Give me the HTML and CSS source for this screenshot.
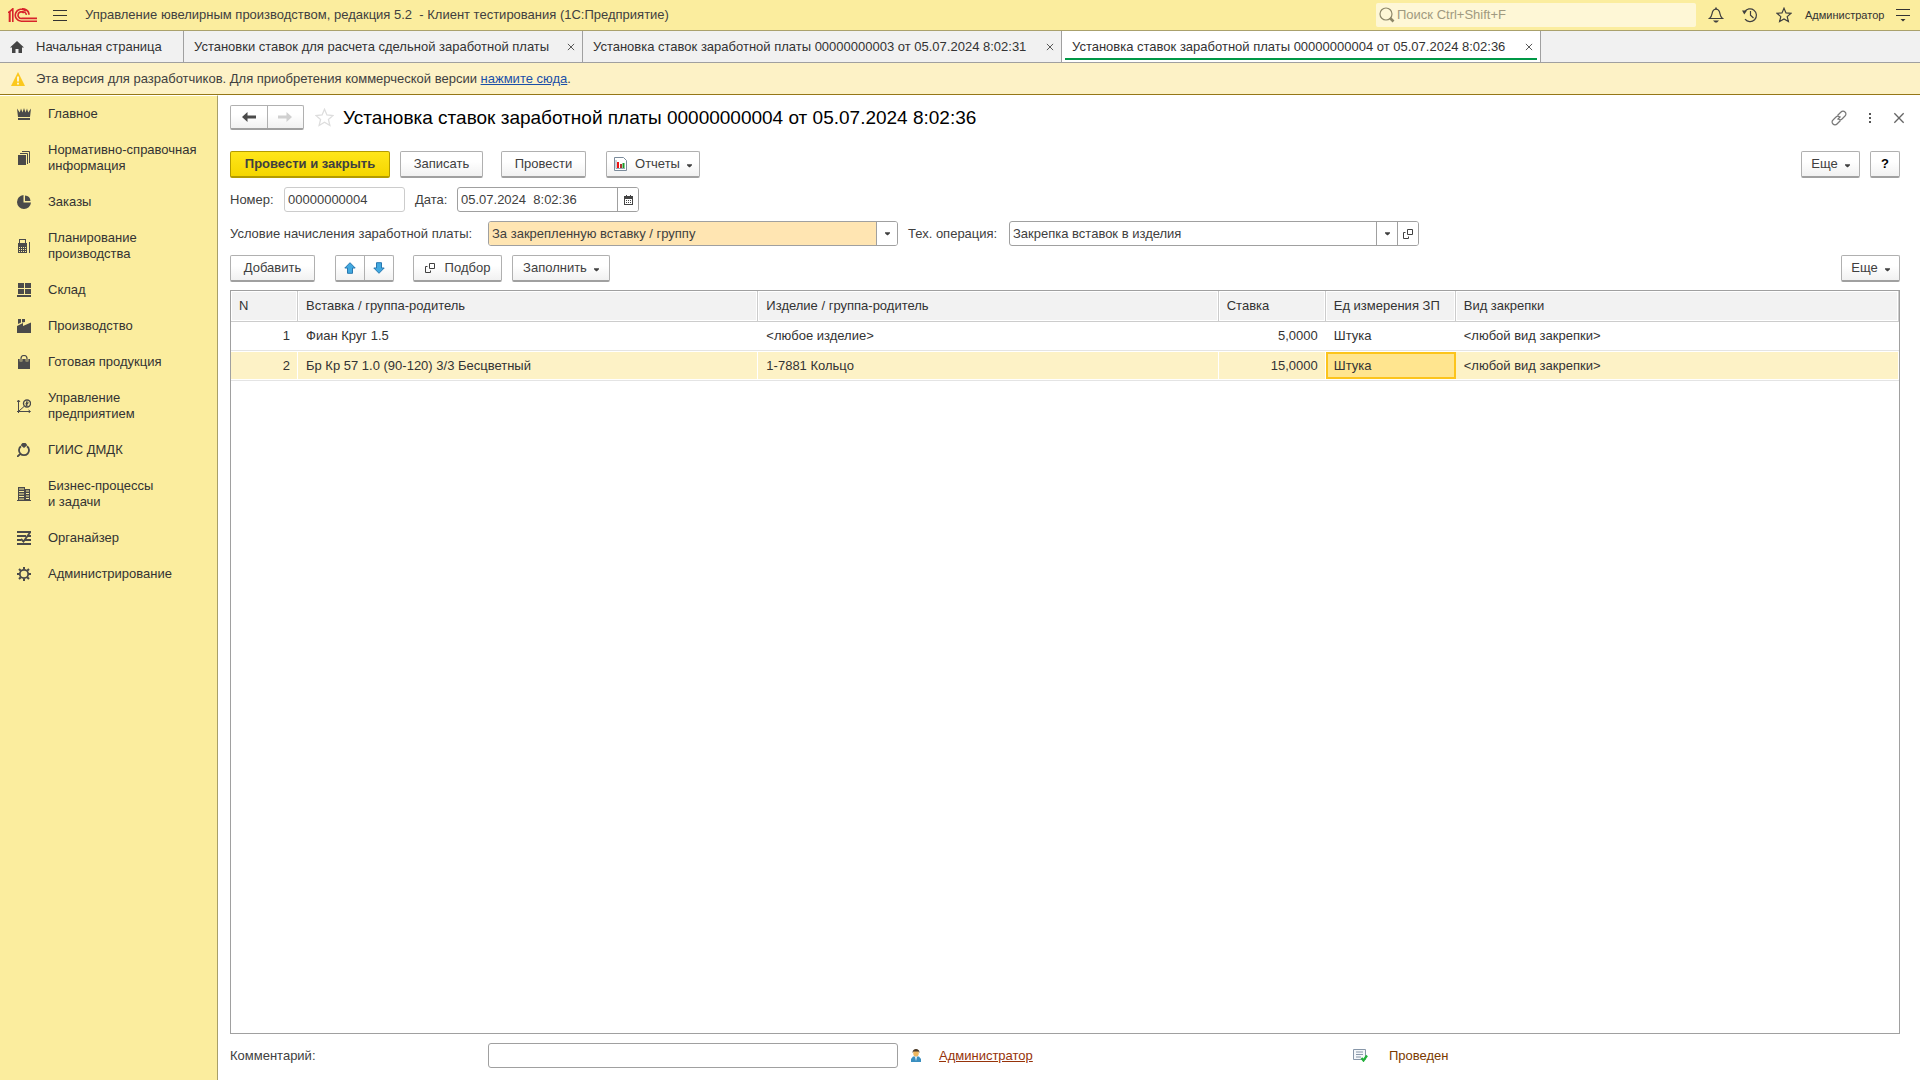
FILE: index.html
```html
<!DOCTYPE html>
<html lang="ru">
<head>
<meta charset="utf-8">
<title>Установка ставок заработной платы</title>
<link rel="stylesheet" href="styles.css">
</head>
<body>
<svg class="defs" aria-hidden="true">
  <symbol id="caret" viewBox="0 0 6 4"><path d="M0 0h6v1L3.500 3.500h-1L0 1z" fill="currentColor"/></symbol>
  <symbol id="cross" viewBox="0 0 9 9"><path d="M1 1l7 7M8 1L1 8" fill="none" stroke="currentColor" stroke-width="1"/></symbol>
  <symbol id="windows" viewBox="0 0 10 10"><path d="M4.500.5h5v5h-5zM2.500 3.500h-2v6h5v-2" fill="none" stroke="currentColor" stroke-width="1"/></symbol>
</svg>

<header class="topbar">
  <svg class="logo" viewBox="0 0 29 15" width="29" height="15"><g fill="none" stroke="#d8232a" stroke-width="1.600"><path d="M0 4.200h1.500V14M1.200 4.200L4.800.8V14"/><path d="M1.800 3.500V14M17.800 3.200A6 6 0 1 0 13.500 13.200H29"/><path d="M15.800 5A3.300 3.300 0 1 0 13.800 10.400H29"/><path d="M21 6.800C21 2 16.500.8 14 .9M18.400 6.800C18 4 16 3.700 14 3.700" /></g></svg>
  <button class="icon-btn menu" aria-label="Меню"><svg viewBox="0 0 14 13" width="14" height="13"><path d="M0 1.500h14M0 6.500h14M0 11.500h14" stroke="#333" stroke-width="1"/></svg></button>
  <span class="app-title">Управление ювелирным производством, редакция 5.2 &nbsp;- Клиент тестирования (1С:Предприятие)</span>
  <label class="search">
    <svg viewBox="0 0 16 16" width="16" height="16"><circle cx="7" cy="7" r="6" fill="none" stroke="#8d8769" stroke-width="1.200"/><path d="M11 11l3.500 3.500" stroke="#8d8769" stroke-width="2.600"/></svg>
    <input type="text" placeholder="Поиск Ctrl+Shift+F" aria-label="Поиск">
  </label>
  <div class="top-tools">
    <button class="icon-btn" aria-label="Уведомления"><svg viewBox="0 0 16 16" width="16" height="16"><path d="M1.500 11.500C4.500 9.500 3.500 6 5 3.800 5.800 2.600 7 2.200 8 2.200s2.200.4 3 1.600C12.500 6 11.500 9.500 14.500 11.500z" fill="none" stroke="#3f3f3f" stroke-width="1.200"/><path d="M8 .5v2" stroke="#3f3f3f" stroke-width="1.600"/><path d="M5 13.500h6l-2 2H7z" fill="#3f3f3f"/></svg></button>
    <button class="icon-btn" aria-label="История"><svg viewBox="0 0 16 16" width="16" height="16"><path d="M2.500 5A6.400 6.400 0 1 1 3 12.200" fill="none" stroke="#3f3f3f" stroke-width="1.200"/><path d="M0 3.500h5L2.300 7.500z" fill="#3f3f3f"/><path d="M8.500 4v4.200l3 2.800" fill="none" stroke="#3f3f3f" stroke-width="1.200"/></svg></button>
    <button class="icon-btn" aria-label="Избранное"><svg viewBox="0 0 16 16" width="16" height="16"><path d="M8 1.200l2 4.700 5 .4-3.800 3.300 1.200 5L8 11.900l-4.400 2.700 1.200-5L1 6.300l5-.4z" fill="none" stroke="#3f3f3f" stroke-width="1.200"/></svg></button>
  </div>
  <a class="user" href="#">Администратор</a>
  <button class="icon-btn" aria-label="Настройки"><svg viewBox="0 0 14 14" width="14" height="14"><path d="M0 1.500h14M0 7.500h14" stroke="#333" stroke-width="1"/><path d="M4.500 11h5L7 13.500z" fill="#333"/></svg></button>
</header>

<nav class="tabs" aria-label="Открытые окна">
  <a class="tab home" href="#"><svg viewBox="0 0 14 12" width="14" height="12"><path d="M7 0l7 6.500h-2V12H8.500V8h-3v4H2V6.500H0z" fill="#444"/></svg><span>Начальная страница</span></a>
  <div class="tab list"><a href="#">Установки ставок для расчета сдельной заработной платы</a><button aria-label="Закрыть"><svg width="8" height="8"><use href="#cross"/></svg></button></div>
  <div class="tab doc"><a href="#">Установка ставок заработной платы 00000000003 от 05.07.2024 8:02:31</a><button aria-label="Закрыть"><svg width="8" height="8"><use href="#cross"/></svg></button></div>
  <div class="tab doc active"><a href="#">Установка ставок заработной платы 00000000004 от 05.07.2024 8:02:36</a><button aria-label="Закрыть"><svg width="8" height="8"><use href="#cross"/></svg></button></div>
</nav>

<div class="notice">
  <svg viewBox="0 0 14 14" width="14" height="14"><path d="M7 0l7 14H0z" fill="#fbc81e"/><path d="M7 4.500v5M7 10.800v1.700" stroke="#fff" stroke-width="1.600"/></svg>
  <span>Эта версия для разработчиков. Для приобретения коммерческой версии <a href="#">нажмите сюда</a>.</span>
</div>

<div class="workspace">
  <nav class="sidebar" aria-label="Разделы">
    <a href="#"><svg viewBox="0 0 14 14"><path d="M0 1.500l2.800 4L4 1.500l1.500 4L7 1l1.500 4.500 1.500-4 1.200 4 2.800-4-1 8.500H1zM1 11h12v2H1z"/></svg>Главное</a>
    <a href="#"><svg viewBox="0 0 14 14"><path d="M1 4h8v10H1z"/><path d="M3 2.500h7.500V13M5 .5h7.500V12" fill="none" stroke="#4a4a4a"/></svg>Нормативно-справочная информация</a>
    <a href="#"><svg viewBox="0 0 14 14"><path d="M6.500 0A7 7 0 1 0 14 7.500H6.500z"/><path d="M8 .5A6 6 0 0 1 13.500 6H8z"/></svg>Заказы</a>
    <a href="#"><svg viewBox="0 0 14 14"><path d="M1 4h1V0h7v4h1v10H1zM3 1v3h5V1z" fill-rule="evenodd"/><path d="M12.500 3v11" stroke="#4a4a4a"/><path d="M2 8.500h7M2 10.500h7M2 12.500h7" stroke="#fbed9e" stroke-width="1" stroke-dasharray="1 1"/></svg>Планирование производства</a>
    <a href="#"><svg viewBox="0 0 14 14"><path d="M1 0h6v5H1zM8 0h6v5H8zM1 6h6v5H1zM8 6h6v5H8zM0 12h14v2H0z"/></svg>Склад</a>
    <a href="#"><svg viewBox="0 0 14 14"><path d="M0 14V7l6-3v3l8-3.500V14zM1 0h3v3.500L1 5zM5 0h3v3L5 3.500z"/></svg>Производство</a>
    <a href="#"><svg viewBox="0 0 14 14"><path d="M1 4h12v10H1z"/><path d="M4 6.500V3.500a3 3 0 0 1 6 0v3" fill="none" stroke="#fbed9e" stroke-width="2.600"/><path d="M4 6.500V3.500a3 3 0 0 1 6 0v3" fill="none" stroke="#4a4a4a" stroke-width="1.200"/></svg>Готовая продукция</a>
    <a href="#"><svg viewBox="0 0 14 14"><path d="M1.500 14V1.500M0 12.500h13M0 3l1.500-2L3 3M11.500 11l2 1.500-2 1.500M2 12l5-4.500" fill="none" stroke="#4a4a4a"/><circle cx="10" cy="4.500" r="3.500" fill="none" stroke="#4a4a4a" stroke-width="1.400"/><path d="M9.500 2.500V7M9.500 3h1.500v1.500H8.500M8.500 6h2.500" fill="none" stroke="#4a4a4a"/></svg>Управление предприятием</a>
    <a href="#"><svg viewBox="0 0 14 14"><path d="M4 1.500L5.500 0h3L10 1.500v1L7 5 4 2.500z"/><path d="M4 3.200a5 5 0 1 0 6 0M3.200 11L0 14" fill="none" stroke="#4a4a4a" stroke-width="1.800"/></svg>ГИИС ДМДК</a>
    <a href="#"><svg viewBox="0 0 14 14"><path d="M1 0h7v2h5v12H1z"/><path d="M2 2h5M2 4.500h5M2 7h5M2 9.500h5M2 12h5M9 4h3M9 6.500h3M9 9h3M9 11.500h3" stroke="#fbed9e"/><path d="M0 13.500h14" stroke="#4a4a4a"/></svg>Бизнес-процессы<br>и задачи</a>
    <a href="#"><svg viewBox="0 0 14 14"><path d="M0 1h14M0 5h9M11 5h3M0 9h4M8 9h6M0 13h14" stroke="#4a4a4a" stroke-width="1.800"/><path d="M13 1.500L6.500 10.500 4 8" fill="none" stroke="#4a4a4a" stroke-width="1.800"/></svg>Органайзер</a>
    <a href="#"><svg viewBox="0 0 14 14"><circle cx="7" cy="7" r="4.200" fill="none" stroke="#4a4a4a" stroke-width="1.800"/><path d="M7 0v2.500M7 11.500V14M0 7h2.500M11.500 7H14M2 2l1.800 1.800M10.200 10.200L12 12M12 2l-1.800 1.800M3.800 10.200L2 12" stroke="#4a4a4a" stroke-width="2"/></svg>Администрирование</a>
  </nav>

  <main class="form">
    <header class="form-head">
      <div class="split nav">
        <button aria-label="Назад"><svg viewBox="0 0 14 12" width="14" height="12"><path d="M0 6l5.500-5v3.500H14v3H5.500V11z" fill="#4a4a4a"/></svg></button>
        <button aria-label="Вперед"><svg viewBox="0 0 14 12" width="14" height="12"><path d="M14 6L8.500 1v3.500H0v3h8.500V11z" fill="#d0d0d0"/></svg></button>
      </div>
      <button class="icon-btn fav" aria-label="В избранное"><svg viewBox="0 0 18 18" width="19" height="19"><path d="M9 1.200l2.300 5.400 5.900.5-4.500 3.800 1.400 5.700L9 13.500l-5.100 3.100 1.400-5.700L.8 7.100l5.900-.5z" fill="none" stroke="#ddd" stroke-width="1.200"/></svg></button>
      <h1>Установка ставок заработной платы 00000000004 от 05.07.2024 8:02:36</h1>
      <div class="head-tools">
        <button class="icon-btn" aria-label="Ссылка"><svg viewBox="0 0 16 16" width="16" height="16"><g fill="none" stroke="#777" stroke-width="1.200"><path d="M6.500 5.500L10 2a2.600 2.600 0 0 1 4 0 2.600 2.600 0 0 1 0 4L11 9a2.600 2.600 0 0 1-3.500 0"/><path d="M9.500 10.500L6 14a2.600 2.600 0 0 1-4 0 2.600 2.600 0 0 1 0-4L5 7a2.600 2.600 0 0 1 3.500 0M6.500 9.500l3-3"/></g></svg></button>
        <button class="icon-btn" aria-label="Действия"><svg viewBox="0 0 4 12" width="4" height="12"><path d="M1 1h2v2H1zM1 5h2v2H1zM1 9h2v2H1z" fill="#555"/></svg></button>
        <button class="icon-btn" aria-label="Закрыть"><svg width="12" height="12" class="close"><use href="#cross"/></svg></button>
      </div>
    </header>

    <div class="commands">
      <button class="btn primary">Провести и закрыть</button>
      <button class="btn medium spaced">Записать</button>
      <button class="btn medium spaced">Провести</button>
      <button class="btn reports"><svg viewBox="0 0 13 14" width="13" height="14"><path d="M.5.5h9l3 3v10H.5z" fill="#fff" stroke="#7b8b9b"/><path d="M2 3v8.500h9" fill="none" stroke="#9aa7b3"/><path d="M3 5h2v6H3z" fill="#e11"/><path d="M6 7h2v4H6z" fill="#a33"/><path d="M8.500 6h2v5h-2z" fill="#1a9a2a"/></svg>Отчеты<svg class="caret"><use href="#caret"/></svg></button>
      <button class="btn more push">Еще<svg class="caret"><use href="#caret"/></svg></button>
      <button class="btn help">?</button>
    </div>

    <div class="row">
      <label for="num">Номер:</label>
      <span class="field number"><input id="num" type="text" value="00000000004" readonly></span>
      <label for="date" class="date-label">Дата:</label>
      <span class="field date"><input id="date" type="text" value="05.07.2024&nbsp; 8:02:36"><button aria-label="Календарь"><svg viewBox="0 0 9 10" width="9" height="10"><path d="M0 1h9v9H0zM1 4v5h7V4z" fill="#444" fill-rule="evenodd"/><path d="M2 5.500h6M2 7.500h6" stroke="#444" stroke-dasharray="1 1"/><path d="M2.500 0v2M6.500 0v2" stroke="#444"/></svg></button></span>
    </div>

    <div class="row">
      <label for="cond" class="wide-label">Условие начисления заработной платы:</label>
      <span class="field long accent"><select id="cond"><option>За закрепленную вставку / группу</option></select><span class="drop"><svg class="caret"><use href="#caret"/></svg></span></span>
      <label for="oper" class="oper-label">Тех. операция:</label>
      <span class="field long"><select id="oper"><option>Закрепка вставок в изделия</option></select><span class="drop"><svg class="caret"><use href="#caret"/></svg></span><button aria-label="Открыть"><svg width="10" height="10"><use href="#windows"/></svg></button></span>
    </div>

    <div class="commands">
      <button class="btn medium spaced">Добавить</button>
      <div class="split move">
        <button aria-label="Вверх"><svg viewBox="0 0 12 12" width="12" height="12"><path d="M6 .7l5.200 5.300H8.500v5.300h-5V6H.8z" fill="#42a9e0" stroke="#2878b0"/></svg></button>
        <button aria-label="Вниз"><svg viewBox="0 0 12 12" width="12" height="12"><path d="M6 11.300L.8 6h2.700V.7h5V6h2.700z" fill="#42a9e0" stroke="#2878b0"/></svg></button>
      </div>
      <button class="btn pick"><svg width="10" height="10"><use href="#windows"/></svg>Подбор</button>
      <button class="btn fill">Заполнить<svg class="caret"><use href="#caret"/></svg></button>
      <button class="btn more push">Еще<svg class="caret"><use href="#caret"/></svg></button>
    </div>

    <div class="grid">
      <table>
        <colgroup><col class="c-num"><col class="c-name"><col class="c-name"><col class="c-rate"><col class="c-unit"><col></colgroup>
        <thead><tr><th>N</th><th>Вставка / группа-родитель</th><th>Изделие / группа-родитель</th><th>Ставка</th><th>Ед измерения ЗП</th><th>Вид закрепки</th></tr></thead>
        <tbody>
          <tr><td class="r">1</td><td>Фиан Круг 1.5</td><td>&lt;любое изделие&gt;</td><td class="r">5,0000</td><td>Штука</td><td>&lt;любой вид закрепки&gt;</td></tr>
          <tr class="selected"><td class="r">2</td><td>Бр Кр 57 1.0 (90-120) 3/3 Бесцветный</td><td>1-7881 Кольцо</td><td class="r">15,0000</td><td class="current">Штука</td><td>&lt;любой вид закрепки&gt;</td></tr>
        </tbody>
      </table>
    </div>

    <footer class="row">
      <label for="comment" class="wide-label">Комментарий:</label>
      <span class="field long"><input id="comment" type="text"></span>
      <span class="author"><svg viewBox="0 0 10 13" width="10" height="13"><path d="M0 13V10l2-2.500h6L10 10v3z" fill="#3a8fc0"/><path d="M4 7.500h2L5 12z" fill="#fff"/><ellipse cx="5" cy="4" rx="2.800" ry="3.600" fill="#f0b860"/><path d="M1.500 4C1.500 1 3 0 5 0s3.500 1 3.500 4L7.500 2.500h-5z" fill="#4a3a2a"/></svg><a href="#">Администратор</a></span>
      <span class="status"><svg viewBox="0 0 15 13" width="15" height="13"><path d="M.5.5h12v10H.5z" fill="#f4f7fa" stroke="#8796a8"/><path d="M3 3h7M3 5.500h7M3 8h5" stroke="#8796a8"/><path d="M8.500 9l2 2.500L14 6.500" fill="none" stroke="#22b03a" stroke-width="2.200"/></svg>Проведен</span>
    </footer>
  </main>
</div>
</body>
</html>
```
FILE: styles.css
```css
* { box-sizing: border-box; }

body {
  margin: 0;
  min-height: 100vh;
  display: flex;
  flex-direction: column;
  background: #fff;
  color: #404040;
  font: 13px/16px "Liberation Sans", Arial, sans-serif;
}

button, input, select { font: inherit; color: inherit; margin: 0; }
button { padding: 0; cursor: pointer; }
svg { flex: none; display: block; }
.defs { position: absolute; width: 0; height: 0; }
.caret { width: 5px; height: 4px; }

.icon-btn {
  display: flex;
  align-items: center;
  justify-content: center;
  border: 0;
  background: none;
}

/* Top bar */
.topbar {
  display: flex;
  align-items: center;
  height: 31px;
  padding: 0 10px 0 8px;
  background: #fbed9e;
  border-bottom: 1px solid #aaa16c;
}
.menu { margin-left: 16px; }
.app-title { flex: 1; margin-left: 18px; white-space: nowrap; }
.search {
  display: flex;
  align-items: center;
  gap: 1px;
  width: 320px;
  height: 24px;
  padding: 0 3px;
  margin-bottom: 1px;
  border-radius: 2px;
  background: #fef7d6;
}
.search input {
  flex: 1;
  min-width: 0;
  border: 0;
  padding: 0 1px;
  background: none;
  outline: 0;
}
.search input::placeholder { color: #a09a80; opacity: 1; }
.top-tools { display: flex; gap: 18px; margin-left: 12px; }
.user { width: 78px; margin: 0 13px; color: #333; font-size: 11px; text-decoration: none; }

/* Window tabs */
.tabs {
  display: flex;
  height: 32px;
  background: #f1f1f1;
  border-bottom: 1px solid #a0a0a0;
}
.tab {
  display: flex;
  align-items: center;
  padding: 0 3px 0 10px;
  border-right: 1px solid #a0a0a0;
  color: #333;
  white-space: nowrap;
}
.tab a, a.tab { color: #333; text-decoration: none; }
.tab a { flex: 1; }
.tab button { border: 0; background: none; padding: 4px; color: #444; }
.home { width: 184px; gap: 12px; }
.list { width: 399px; }
.doc { width: 479px; }
.active {
  background: linear-gradient(#009846, #009846) 3px 27px / calc(100% - 6px) 2px no-repeat #fff;
}

/* Developer notice */
.notice {
  display: flex;
  align-items: center;
  gap: 11px;
  height: 32px;
  padding-left: 11px;
  background: #fdf2c6;
  border-bottom: 1px solid #957717;
}
.notice a { color: #1a4fa8; }

.workspace { flex: 1; display: flex; }

/* Sections */
.sidebar {
  flex: none;
  width: 218px;
  background: #fbed9e;
  border-right: 1px solid #a89f68;
  border-top: 1px solid #fff;
}
.sidebar a {
  display: flex;
  align-items: center;
  gap: 17px;
  padding: 10px 12px 10px 17px;
  color: #333;
  text-decoration: none;
}
.sidebar svg { width: 14px; height: 14px; fill: #4a4a4a; }

/* Document form */
.form {
  flex: 1;
  min-width: 0;
  display: flex;
  flex-direction: column;
  gap: 9px;
  padding: 10px 20px 12px 12px;
}
.form-head { display: flex; align-items: center; height: 25px; margin-bottom: 12px; }
.fav { margin-left: 11px; }
h1 { flex: 1; margin: 0 0 0 9px; color: #000; font-size: 19px; font-weight: normal; line-height: 23px; }
.head-tools { display: flex; align-items: center; gap: 21px; padding-right: 15px; margin-right: -20px; }
.close { color: #666; }

.commands { display: flex; align-items: center; height: 27px; gap: 10px; }

.btn, .split {
  display: flex;
  align-items: center;
  justify-content: center;
  height: 27px;
  border: 1px solid #b0b0b0;
  border-bottom: 2px solid #a0a0a0;
  border-radius: 2px;
  background: linear-gradient(#fff 40%, #f1f1f1);
}
.btn { gap: 8px; padding: 0 6px; }
.btn .caret { margin: 3px 0 0 -1px; }
.primary {
  width: 160px;
  border-color: #b39b00;
  background: linear-gradient(#ffe61a, #f5d600);
  font-weight: bold;
}
.medium { width: 85px; }
.spaced { margin-right: 10px; }
.primary + .medium { margin-right: 8px; width: 83px; }
.reports { width: 94px; }
.pick { width: 89px; margin-left: 9px; gap: 10px; }
.fill { width: 98px; }
.more { width: 59px; }
.push { margin-left: auto; }
.help { width: 30px; color: #000; font-weight: bold; }

.split { justify-content: stretch; }
.split button {
  flex: 1;
  height: 100%;
  display: flex;
  align-items: center;
  justify-content: center;
  border: 0;
  background: none;
}
.split button + button { border-left: 1px solid #b0b0b0; }
.nav { width: 74px; height: 25px; }
.move { width: 59px; }

.row { display: flex; align-items: center; height: 25px; white-space: nowrap; }
.wide-label { width: 258px; }
.row label[for="num"] { width: 54px; }
.date-label { width: 42px; margin-left: 10px; }
.oper-label { width: 101px; margin-left: 10px; }

.field {
  display: flex;
  height: 25px;
  border: 1px solid #a0a0a0;
  border-radius: 3px;
  background: #fff;
  overflow: hidden;
}
.field input, .field select {
  flex: 1;
  min-width: 0;
  height: 100%;
  padding: 0 3px;
  border: 0;
  outline: 0;
  background: none;
  appearance: none;
}
.field button, .drop {
  flex: none;
  display: flex;
  align-items: center;
  justify-content: center;
  width: 21px;
  border: 0;
  border-left: 1px solid #a0a0a0;
  background: #fff;
}
.number { width: 121px; border-color: #ccc; }
.date { width: 182px; }
.long { width: 410px; }
.accent select { background: #ffe5b2; }

/* Rates table */
.grid {
  flex: 1;
  margin-top: -1px;
  border: 1px solid #a0a0a0;
}
table { width: 100%; table-layout: fixed; border-collapse: separate; border-spacing: 0; }
.c-num { width: 67px; }
.c-name { width: 27.6%; }
.c-rate { width: 107px; }
.c-unit { width: 130px; }
th, td { padding: 0 8px; text-align: left; font-weight: normal; color: #333; white-space: nowrap; overflow: hidden; }
th {
  height: 31px;
  background: #f2f2f2;
  border-right: 1px solid #ccc;
  border-bottom: 1px solid #ccc;
  box-shadow: inset 0 0 0 1px #fff;
}
td { height: 29px; border-bottom: 1px solid #e4e4e4; }
.r { text-align: right; }
.selected td {
  height: 30px;
  background: #fdf2c6;
  box-shadow: inset 0 1px #fff, inset 0 -1px #fff, inset -1px 0 #fff;
}
.selected .current {
  background: #ffe58f;
  box-shadow: inset 0 1px #fff, inset 0 -1px #fff, inset 0 3px #fcc41c, inset 0 -3px #fcc41c, inset 2px 0 #fcc41c, inset -2px 0 #fcc41c;
}

.author { display: flex; align-items: center; gap: 18px; width: 442px; margin-left: 13px; }
.author a { color: #96330a; }
.status { display: flex; align-items: center; gap: 21px; color: #7a3a00; }
```
